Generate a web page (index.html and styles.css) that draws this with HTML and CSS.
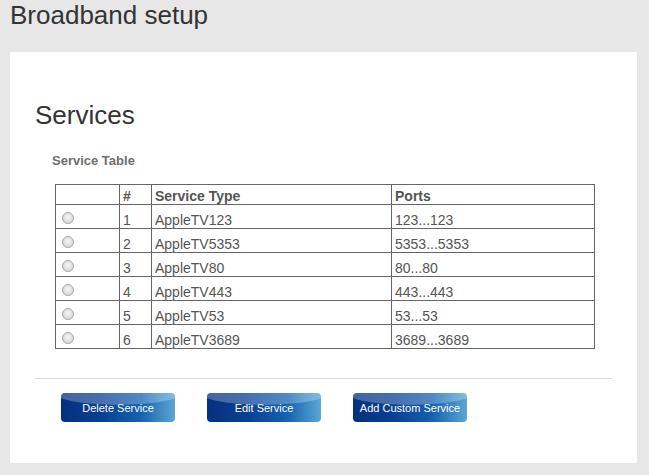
FILE: index.html
```html
<!DOCTYPE html>
<html>
<head>
<meta charset="utf-8">
<link rel="stylesheet" href="styles.css">
</head>
<body>
<header class="top">
  <h1 class="title">Broadband setup</h1>
</header>
<main class="panel">
  <h2 class="heading">Services</h2>
  <div class="caption">Service Table</div>
  <table class="svc">
    <colgroup>
      <col class="c-sel"><col class="c-num"><col class="c-type"><col class="c-ports">
    </colgroup>
    <thead>
      <tr><th></th><th>#</th><th>Service Type</th><th>Ports</th></tr>
    </thead>
    <tbody>
      <tr><td><input class="radio" type="radio" name="svc"></td><td>1</td><td>AppleTV123</td><td>123...123</td></tr>
      <tr><td><input class="radio" type="radio" name="svc"></td><td>2</td><td>AppleTV5353</td><td>5353...5353</td></tr>
      <tr><td><input class="radio" type="radio" name="svc"></td><td>3</td><td>AppleTV80</td><td>80...80</td></tr>
      <tr><td><input class="radio" type="radio" name="svc"></td><td>4</td><td>AppleTV443</td><td>443...443</td></tr>
      <tr><td><input class="radio" type="radio" name="svc"></td><td>5</td><td>AppleTV53</td><td>53...53</td></tr>
      <tr><td><input class="radio" type="radio" name="svc"></td><td>6</td><td>AppleTV3689</td><td>3689...3689</td></tr>
    </tbody>
  </table>
  <div class="sep"></div>
  <div class="actions">
    <button class="btn">Delete Service</button>
    <button class="btn">Edit Service</button>
    <button class="btn">Add Custom Service</button>
  </div>
</main>
</body>
</html>
```
FILE: styles.css
```css
html, body {
  margin: 0;
  padding: 0;
}
body {
  background: #e7e7e8;
  font-family: "Liberation Sans", Arial, sans-serif;
  width: 649px;
  height: 475px;
  overflow: hidden;
}
.top {
  height: 52px;
  padding-left: 10px;
}
.title {
  margin: 0;
  font-weight: normal;
  font-size: 26px;
  line-height: 30px;
  color: #333;
}
.panel {
  background: #fff;
  margin-left: 10px;
  width: 577px;
  height: 363px;
  padding: 48px 25px 0 25px;
}
.heading {
  margin: 0;
  font-weight: normal;
  font-size: 26px;
  line-height: 30px;
  color: #333;
}
.caption {
  margin: 23px 0 0 17px;
  font-size: 13px;
  font-weight: bold;
  line-height: 16px;
  color: #6e6e6e;
}
.svc {
  margin: 15px 0 0 20px;
  border-collapse: collapse;
  table-layout: fixed;
  width: 540px;
  font-size: 14px;
  color: #555;
}
.c-sel { width: 64px; }
.c-num { width: 32px; }
.c-type { width: 240px; }
.c-ports { width: 203px; }
.svc th, .svc td {
  border: 1px solid #666;
  text-align: left;
  line-height: 16px;
  padding: 0 2px 0 3px;
  vertical-align: top;
  white-space: nowrap;
}
.svc th {
  padding-top: 3px;
  font-weight: bold;
  color: #555;
}
.svc td {
  padding-top: 7px;
}
.radio {
  -webkit-appearance: none;
  appearance: none;
  display: block;
  margin: 0 0 0 3px;
  width: 12px;
  height: 12px;
  border-radius: 50%;
  border: 1px solid #a8a8a8;
  background: radial-gradient(circle at 50% 40%, #f6f6f6 0%, #dedede 60%, #c8c8c8 100%);
  box-sizing: border-box;
}
.sep {
  margin-top: 29px;
  border-top: 1px solid #dadada;
}
.actions {
  display: flex;
  gap: 32px;
  margin: 14px 0 0 26px;
}
.btn {
  position: relative;
  overflow: hidden;
  width: 114px;
  height: 29px;
  border: none;
  border-radius: 4px;
  padding: 0;
  color: #fff;
  font-family: "Liberation Sans", Arial, sans-serif;
  font-size: 11px;
  background: linear-gradient(90deg, #06307f 0%, #0a3f93 35%, #1562b0 70%, #5aa8d4 100%);
}
.btn::before {
  content: "";
  position: absolute;
  left: -10%;
  top: -18px;
  width: 120%;
  height: 30px;
  border-radius: 50%;
  background: rgba(255, 255, 255, 0.25);
}
```
